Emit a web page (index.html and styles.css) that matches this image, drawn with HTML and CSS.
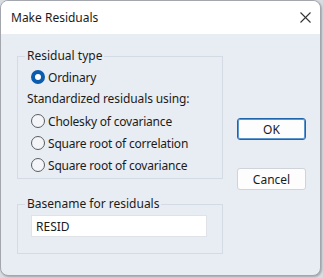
FILE: index.html
```html
<!DOCTYPE html>
<html lang="en">
<head>
    <meta charset="UTF-8">
    <title>Make Residuals</title>
    <link rel="stylesheet" href="styles.css">
</head>
<body>
    <div class="dialog">
        <div class="title-bar">
            <span class="title">Make Residuals</span>
            <svg class="close" width="11" height="11" viewBox="0 0 11 11" fill="none" stroke="#333" stroke-width="1.1">
                <line x1="0.5" y1="0.5" x2="10.5" y2="10.5"></line>
                <line x1="10.5" y1="0.5" x2="0.5" y2="10.5"></line>
            </svg>
        </div>

        <div class="dialog-body">
            <div class="left-col">
                <fieldset class="group group-type">
                    <legend>Residual type</legend>
                    <label class="option first">
                        <input type="radio" name="rtype" checked>
                        <span>Ordinary</span>
                    </label>
                    <div class="sub-label">Standardized residuals using:</div>
                    <label class="option">
                        <input type="radio" name="rtype">
                        <span>Cholesky of covariance</span>
                    </label>
                    <label class="option">
                        <input type="radio" name="rtype">
                        <span>Square root of correlation</span>
                    </label>
                    <label class="option">
                        <input type="radio" name="rtype">
                        <span>Square root of covariance</span>
                    </label>
                </fieldset>

                <fieldset class="group group-name">
                    <legend>Basename for residuals</legend>
                    <input type="text" class="text-input" value="RESID">
                </fieldset>
            </div>

            <div class="button-col">
                <button class="btn btn-default">OK</button>
                <button class="btn">Cancel</button>
            </div>
        </div>
    </div>
</body>
</html>
```
FILE: styles.css
```css
* {
    margin: 0;
    padding: 0;
    box-sizing: border-box;
    font-family: "Noto Sans", "Open Sans", sans-serif;
}

body {
    background: #d9dde2;
    width: 323px;
    height: 278px;
    overflow: hidden;
}

.dialog {
    width: 321px;
    height: 276px;
    background: #e8edf3;
    border: 1px solid #a3a7ad;
    border-radius: 8px;
    overflow: hidden;
    box-shadow: 1px 1px 2px rgba(0, 0, 0, 0.25);
}

.title-bar {
    height: 33px;
    background: #ffffff;
    display: flex;
    align-items: center;
    justify-content: space-between;
    padding: 0 9px 0 10px;
}

.title {
    font-size: 12px;
    color: #1b1b1b;
}

.close {
    display: block;
    margin-top: -1px;
}

.dialog-body {
    display: flex;
    padding: 14px 0 0 16px;
}

.left-col {
    width: 206px;
}

.group {
    border: 1px solid #d4dbe4;
    padding: 0 6px 2px 7px;
}

.group legend {
    font-size: 12px;
    line-height: 16px;
    color: #1b1b1b;
    padding: 0 2px;
    margin-left: 0;
}

.group-name {
    margin-top: 17px;
    padding-bottom: 16px;
}

.option {
    display: flex;
    align-items: center;
    height: 22px;
    padding-left: 6px;
    gap: 3px;
    font-size: 12px;
    letter-spacing: -0.2px;
    color: #1b1b1b;
}

.option.first {
    margin-top: 2px;
}

.sub-label {
    height: 22px;
    line-height: 22px;
    font-size: 12px;
    letter-spacing: -0.1px;
    color: #1b1b1b;
    padding-left: 2px;
}

.option input {
    appearance: none;
    width: 14px;
    height: 14px;
    border-radius: 50%;
    border: 1px solid #5a5e63;
    background: #f3f5f8;
    margin: 0;
    flex-shrink: 0;
}

.option input:checked {
    border: 4px solid #0b5cad;
    background: #ffffff;
}

.text-input {
    display: block;
    margin: 3px 0 0 6px;
    width: 176px;
    height: 22px;
    border: 1px solid #dfe3e8;
    background: #ffffff;
    padding: 0 4px;
    font-size: 12px;
    color: #1b1b1b;
    outline: none;
}

.button-col {
    display: flex;
    flex-direction: column;
    gap: 28px;
    padding: 70px 0 0 14px;
}

.btn {
    width: 69px;
    height: 22px;
    border: 1px solid #d0d4d9;
    border-radius: 3px;
    background: #fdfdfd;
    font-size: 12px;
    color: #1b1b1b;
}

.btn-default {
    border: 1px solid #1f65ad;
    box-shadow: inset 0 0 0 1px #5d95cf;
}
```
